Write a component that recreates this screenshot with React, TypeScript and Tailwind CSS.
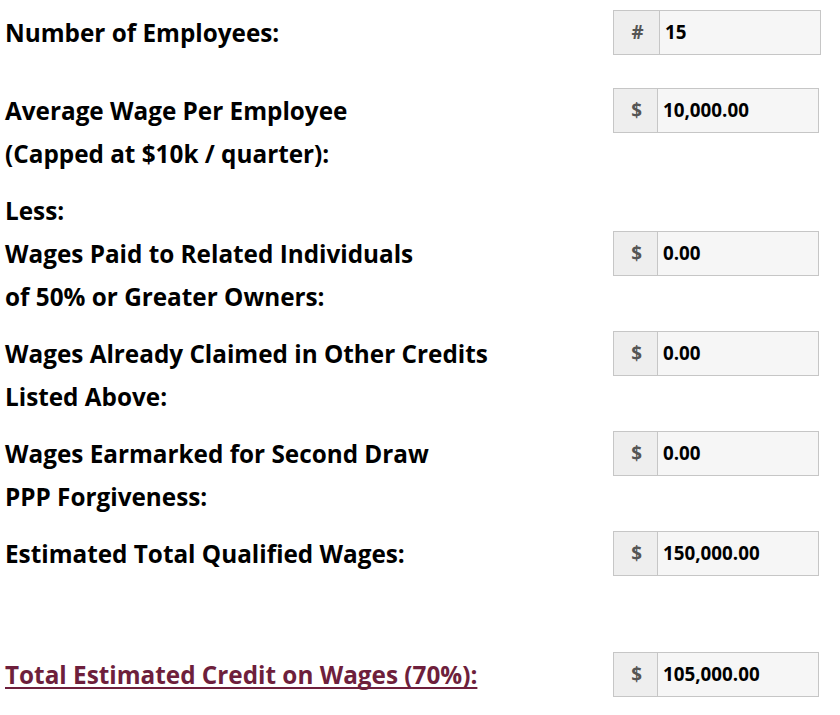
import React from "react";

type Row = {
  lines: string[];
  sym: string;
  value: string;
  boxOffset?: string;
  className: string;
  wide?: boolean;
  total?: boolean;
};

const rows: Row[] = [
  { lines: ["Number of Employees:"], sym: "#", value: "15", className: "mt-[10px]", wide: true },
  {
    lines: ["Average Wage Per Employee", "(Capped at $10k / quarter):"],
    sym: "$",
    value: "10,000.00",
    className: "mt-[33px]",
  },
  {
    lines: ["Less:", "Wages Paid to Related Individuals", "of 50% or Greater Owners:"],
    sym: "$",
    value: "0.00",
    boxOffset: "mt-[43px]",
    className: "mt-[12px]",
  },
  {
    lines: ["Wages Already Claimed in Other Credits", "Listed Above:"],
    sym: "$",
    value: "0.00",
    className: "mt-[12px]",
  },
  {
    lines: ["Wages Earmarked for Second Draw", "PPP Forgiveness:"],
    sym: "$",
    value: "0.00",
    className: "mt-[12px]",
  },
  {
    lines: ["Estimated Total Qualified Wages:"],
    sym: "$",
    value: "150,000.00",
    className: "mt-[12px]",
  },
  {
    lines: ["Total Estimated Credit on Wages (70%):"],
    sym: "$",
    value: "105,000.00",
    className: "mt-[76px]",
    total: true,
  },
];

function InputGroup({ sym, value, wide }: { sym: string; value: string; wide?: boolean }) {
  return (
    <div
      className={
        "flex h-[45px] border border-[#c6c6c6] " +
        (wide ? "w-[208px] mr-[19px]" : "w-[206px] mr-[21px]")
      }
    >
      <div
        className={
          "flex items-center justify-center pl-[2px] bg-[#eeeeee] border-r border-[#c6c6c6] text-[18.8px] font-bold text-[#555] " +
          (wide ? "w-[46px]" : "w-[44px]")
        }
      >
        {sym}
      </div>
      <div className="flex-1 flex items-center bg-[#f6f6f6] pl-[5px] text-[18.8px] font-bold text-black">
        {value}
      </div>
    </div>
  );
}

export default function App() {
  return (
    <main className="min-h-screen bg-white pl-[5px] font-['Open_Sans',sans-serif]">
      {rows.map((r, i) => (
        <div key={i} className={"flex items-start " + r.className}>
          <div
            className={
              "flex-1 pt-px pb-px text-[24.3px] font-bold leading-[43px] " +
              (r.total
                ? "text-[#6e1f3c] underline decoration-2 underline-offset-[3px] [text-decoration-skip-ink:none]"
                : "text-black")
            }
          >
            {r.lines.map((l) => (
              <div key={l}>{l}</div>
            ))}
          </div>
          <div className={r.boxOffset ?? ""}>
            <InputGroup sym={r.sym} value={r.value} wide={r.wide} />
          </div>
        </div>
      ))}
    </main>
  );
}
